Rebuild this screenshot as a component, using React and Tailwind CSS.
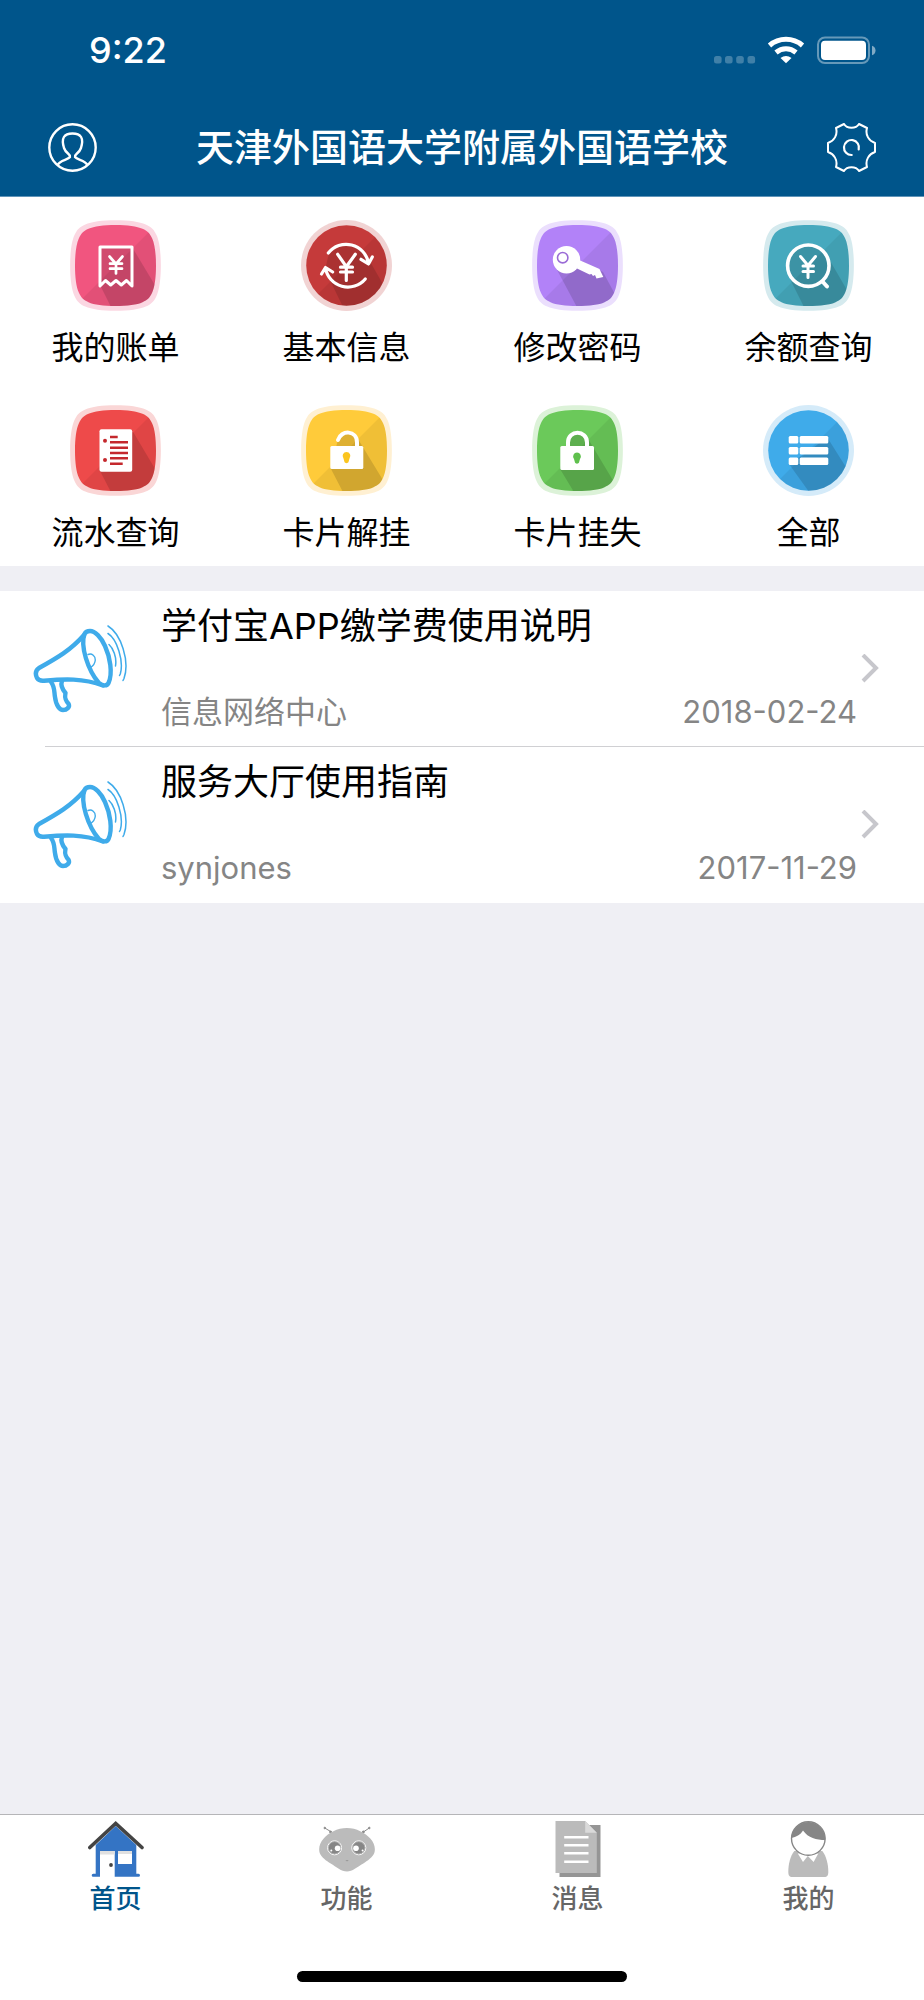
import { useState } from "react"

const SQUIRCLE =
  "M45.5 5C57.5 5 67 6.3 72.5 8.8C77.5 11 80 13.5 82.2 18.5C84.7 24 86 33.5 86 45.5C86 57.5 84.7 67 82.2 72.5C80 77.5 77.5 80 72.5 82.2C67 84.7 57.5 86 45.5 86C33.500 86 24 84.7 18.5 82.2C13.5 80 11 77.5 8.8 72.5C6.3 67 5 57.500 5 45.5C5 33.5 6.3 24 8.8 18.5C11 13.5 13.5 11 18.5 8.8C24 6.3 33.5 5 45.5 5Z"

// Coloured badge with a pale rim, a diagonal shade and a long shadow
const Badge = ({ id, color, rim, round, shadow, children }) => (
  <svg viewBox="0 0 91 91" className="w-[91px] h-[91px]" aria-hidden="true">
    <defs>
      <clipPath id={id}>
        {round ? <circle cx="45.5" cy="45.5" r="40.3" /> : <path d={SQUIRCLE} />}
      </clipPath>
    </defs>
    {round ? (
      <circle cx="45.5" cy="45.5" r="45.5" fill={rim} />
    ) : (
      <path
        d={SQUIRCLE}
        fill={rim}
        transform="translate(45.5 45.5) scale(1.12) translate(-45.5 -45.5)"
      />
    )}
    <g clipPath={`url(#${id})`}>
      <rect width="91" height="91" fill={color} />
      <path d="M91 0L0 91H91Z" fill="#000" opacity="0.06" />
      <path d={shadow} fill="#000" opacity="0.13" />
    </g>
    {children}
  </svg>
)

const stroke = {
  fill: "none",
  stroke: "#fff",
  strokeLinecap: "round",
  strokeLinejoin: "round",
}

const BillIcon = () => (
  <Badge id="bill" color="#f1557f" rim="#fbd7e2" shadow="M30 27H62L91 75V91H43L30 65Z">
    <g {...stroke} strokeWidth="3">
      <path d="M30 66V27H62V66L56.5 60.5L51.3 65L46 60.5L40.7 65L35.5 60.5Z" />
      <path d="M39.5 36.5L46 44L52.5 36.5M46 44V53.5M40 43.7H52M40 48.7H52" strokeWidth="2.7" />
    </g>
  </Badge>
)

const InfoIcon = () => (
  <Badge id="info" color="#c53a3a" rim="#f1d3d3" round shadow="M28 33L45 23L63 31L91 80V91H44L24 50Z">
    <g {...stroke} strokeWidth="3.2">
      <path d="M27.3 33A22.7 22.7 0 0 1 67.5 43M60 39.3L67.5 44L71.3 37" />
      <path d="M64.3 59A22.7 22.7 0 0 1 24.5 48M20.5 54L24.5 47.5L31.7 52" />
      <path d="M36.7 34.3L45.3 46.7L54.3 34.3M45.3 46.7V60.5M39.5 47.2H51.5M39.5 52H51.5" />
    </g>
  </Badge>
)

const KeyIcon = () => (
  <Badge id="key" color="#b282f8" rim="#ebdffd" shadow="M24 48L47 40L71 52L91 89V91H47Z">
    <path d="M46 39.5L67.5 49L71.3 57L64.5 58.5L63 55L61 56L59.5 54L57.5 54.5L45 48.5Z" fill="#fff" />
    <circle cx="34.5" cy="39.7" r="13.7" fill="#fff" />
    <circle cx="30.7" cy="37.7" r="5.2" fill="#fff" stroke="#9a6bd6" strokeWidth="1.6" />
  </Badge>
)

const BalanceIcon = () => (
  <Badge
    id="balance"
    color="#46a9be"
    rim="#d5eaee"
    shadow="M45 25C56 25 63 31 66 39L91 82V91H43L28 61C20 42 29 26 45 25Z">
    <g {...stroke} strokeWidth="3.6">
      <circle cx="45.3" cy="45.7" r="20.7" />
      <path d="M59.5 61.5L64 66.5" strokeWidth="4" />
      <path d="M37.5 36.5L45 45.5L52.5 36.5M45 45.5V57.5M40 46H50.5M40 51.5H50.5" strokeWidth="3" />
    </g>
  </Badge>
)

const RecordIcon = () => (
  <Badge id="record" color="#ee4a4a" rim="#fad6d6" shadow="M62 25L91 74V91H43L30 66Z">
    <rect x="29.5" y="24.3" width="32.7" height="42.4" rx="2" fill="#fff" />
    <path
      d="M40 32H47.7M40 37.3H58M40 42.7H58M40 48H58M40 53.3H58M40 58.7H52.7"
      stroke="#c4282d"
      strokeWidth="2.6"
    />
    <circle cx="35" cy="35.7" r="2" fill="#c4282d" />
    <circle cx="35" cy="55" r="2" fill="#c4282d" />
  </Badge>
)

const UnlockIcon = () => (
  <Badge id="unlock" color="#ffcb3a" rim="#fff0d2" shadow="M37 34C40 26 52 24 57 34L91 90V91H44L30 64Z">
    <path d="M37 35C40 24.5 56 25 56 37.5V43" {...stroke} strokeWidth="4" />
    <rect x="29.3" y="41" width="33" height="23" rx="1.5" fill="#fff" />
    <path
      d="M45.5 47A4 4 0 0 1 48.5 53.5L47.5 57C47 58.5 44 58.5 43.5 57L42.5 53.5A4 4 0 0 1 45.5 47Z"
      fill="#fbc51f"
    />
  </Badge>
)

const LockIcon = () => (
  <Badge id="lock" color="#6bc95a" rim="#dcf2d8" shadow="M36 36C38 25 52 24 55 32L91 92H45L28 64Z">
    <path d="M36 42V37.5C36 24.5 55 24.5 55 37.5V42" {...stroke} strokeWidth="4" />
    <rect x="28.3" y="41" width="33.7" height="24" rx="1.5" fill="#fff" />
    <path
      d="M45 47.5A4 4 0 0 1 48 54L47 57.5C46.5 59 43.5 59 43 57.5L42 54A4 4 0 0 1 45 47.5Z"
      fill="#5fc04d"
    />
  </Badge>
)

const AllIcon = () => (
  <Badge id="all" color="#3fabea" rim="#d5ebf9" round shadow="M64 32L91 75V91H49L26 59L50 43Z">
    <g fill="#fff">
      {[31, 42, 52.5].map((y) => (
        <g key={y}>
          <rect x="25.7" y={y} width="9.6" height="7.4" rx="1.5" />
          <rect x="36.7" y={y} width="28.6" height="7.4" rx="1.5" />
        </g>
      ))}
    </g>
  </Badge>
)

const MegaphoneIcon = () => (
  <svg
    viewBox="0 0 96 88"
    className="w-24 h-[88px] shrink-0"
    fill="none"
    stroke="#3fabea"
    strokeWidth="4.4"
    strokeLinecap="round"
    strokeLinejoin="round"
    aria-hidden="true">
    <path d="M57 6C62 6 68 12 72 21C77 32 80 48 75.5 58C74 61.5 69 61 65.5 57.5C55 45 47 21 51.5 9C52.5 7 54.5 6 57 6Z" />
    <path d="M51 10C38 25 24 33 6 43C2 46 2 49 4 53C6 56 8 56 11 55.7C31 54 50 53 70 60.5" />
    <path d="M18 57C22 62 21 67 22 72C23 81 27 85 30 85C34 85 37 82 35.7 79C31 74 32 71 32.5 68C30 65 27 61 29 56" />
    <path d="M55 29.5C59 28 62.5 31 62.3 35C62 38.5 60 41 57.5 42.5" strokeWidth="1.4" />
    <path
      d="M75 1C88 9 97 36 91 53.5L90 55.5M75 8.5C84 14 91 36 87.3 49L86.5 50.5M76 19.5C80 23 84 32 82.5 41"
      strokeWidth="1.5"
    />
  </svg>
)

const HomeTabIcon = () => (
  <svg viewBox="0 0 56 56" className="w-14 h-14" aria-hidden="true">
    <path
      d="M7.7 24L27.7 5L48.3 24V52.7H50.5A1.5 1.5 0 0 1 50.5 55.7H5.2A1.5 1.5 0 0 1 5.2 52.7H7.7Z"
      fill="#3474c4"
    />
    <path d="M12 30H26.7V56H12ZM30 30H44V43H30Z" fill="#fff" />
    <path d="M12 30H26.7V33.5H12ZM30 30H44V33H30Z" fill="#e0e0e0" />
    <circle cx="23" cy="44" r="1.9" fill="#444" />
    <path d="M1.8 26.5L27.7 2.5L54 26.5" fill="none" stroke="#444" strokeWidth="3.6" strokeLinecap="round" />
  </svg>
)

const FeatureTabIcon = () => (
  <svg viewBox="0.7 -4 56 56" className="w-14 h-14" aria-hidden="true">
    <g stroke="#8a8a8a" fill="#8a8a8a" strokeWidth="1">
      <path d="M6.5 3L12.3 6.5M51 3L45 7" />
      <circle cx="6.5" cy="3" r="0.8" />
      <circle cx="51" cy="3" r="0.8" />
      <circle cx="12.3" cy="7" r="1" />
      <circle cx="45" cy="7" r="1" />
    </g>
    <path
      d="M28.7 3C38 3 47 8 52 13.5C56 18 57.5 23 56 28C54.5 32 49 36 45 38.5C39 42 34 46.5 28.7 46.5C23 46.5 18 42 12.4 38.5C8 36 3 32 1.4 28C0 23 1.4 18 5.4 13.5C10 8 19 3 28.7 3Z"
      fill="#bbb"
    />
    <g fill="#868686" stroke="#fff" strokeWidth="1">
      <circle cx="16.3" cy="22.8" r="7" />
      <circle cx="40.5" cy="22.8" r="7" />
    </g>
    <g fill="none" stroke="#bbb" strokeWidth="0.8">
      <circle cx="16.3" cy="22.8" r="6.2" />
      <circle cx="40.5" cy="22.8" r="6.2" />
    </g>
    <g fill="#fff">
      <circle cx="19.3" cy="23.2" r="2.8" />
      <circle cx="37.7" cy="23.2" r="2.8" />
      <circle cx="13" cy="25.5" r="1" />
      <circle cx="44.3" cy="25.5" r="1" />
    </g>
    <path d="M27 35H30.5L28.7 36.5Z" fill="#999" />
  </svg>
)

const MessageTabIcon = () => (
  <svg viewBox="-5.5 0 56 56" className="w-14 h-14" aria-hidden="true">
    <path d="M4 4H45V56H4Z" fill="#959595" />
    <path d="M0 0H29.7L41.3 11.7V52H0Z" fill="#bbb" />
    <path d="M29.7 0L41.3 11.7H29.7Z" fill="#dadada" />
    <path d="M8.7 16.3H33M8.7 24.3H33M8.7 32.3H33M8.7 40.7H33" stroke="#fff" strokeWidth="2.6" />
  </svg>
)

const MeTabIcon = () => (
  <svg viewBox="0.7 0 56 56" className="w-14 h-14" aria-hidden="true">
    <path d="M14 30H42C46 35 48 43 48 51C48 54 47 56 44 56H12C9 56 8 54 8 51C8 43 10 35 14 30Z" fill="#bbb" />
    <path d="M17.5 32.5L22.7 41L27.5 35L33.3 41L38 32.5Z" fill="#fff" />
    <circle cx="28" cy="17.5" r="16.8" fill="#fff" stroke="#868686" strokeWidth="1.4" />
    <path d="M11 17A17 17 0 0 1 45 19C36 19 28 17 22.7 9.5C20 14 16 16 11 17Z" fill="#868686" />
  </svg>
)

const services = [
  { name: "我的账单", Icon: BillIcon },
  { name: "基本信息", Icon: InfoIcon },
  { name: "修改密码", Icon: KeyIcon },
  { name: "余额查询", Icon: BalanceIcon },
  { name: "流水查询", Icon: RecordIcon },
  { name: "卡片解挂", Icon: UnlockIcon },
  { name: "卡片挂失", Icon: LockIcon },
  { name: "全部", Icon: AllIcon },
]

const notices = [
  { title: "学付宝APP缴学费使用说明", author: "信息网络中心", date: "2018-02-24" },
  { title: "服务大厅使用指南", author: "synjones", date: "2017-11-29" },
]

const tabs = [
  { name: "首页", Icon: HomeTabIcon },
  { name: "功能", Icon: FeatureTabIcon },
  { name: "消息", Icon: MessageTabIcon },
  { name: "我的", Icon: MeTabIcon },
]

const StatusBar = () => (
  <div className="flex items-center justify-between h-[100px] pl-[89px] pr-12">
    <span className="text-[36px] leading-10 font-medium">9:22</span>
    <svg viewBox="0 0 162 28" className="w-[162px] h-7" fill="#fff" aria-hidden="true">
      <g opacity="0.25">
        <rect x="0" y="20" width="7.6" height="7.6" rx="2.5" />
        <rect x="11" y="20" width="7.6" height="7.6" rx="2.5" />
        <rect x="22.2" y="20" width="7.6" height="7.6" rx="2.5" />
        <rect x="33.5" y="20" width="7.6" height="7.6" rx="2.5" />
      </g>
      <g fill="none" stroke="#fff" strokeWidth="5">
        <path d="M55.5 9.5C65 1.3 79 1.3 88.5 9.5" />
        <path d="M62 16.5C68 11.5 76 11.5 82 16.5" />
      </g>
      <path d="M66.5 22C70 19.3 74 19.3 77.5 22L72 27.3Z" />
      <rect x="104" y="1.5" width="51" height="25.5" rx="7" fill="none" stroke="#fff" strokeWidth="2" opacity="0.4" />
      <rect x="107" y="4.7" width="45" height="19.3" rx="4" />
      <path d="M158 9.7C162.7 11 162.7 18 158 19.3Z" opacity="0.5" />
    </svg>
  </div>
)

const Header = () => (
  <header className="bg-[#00558b] text-white border-b border-[#5f94b9]">
    <StatusBar />
    <div className="flex items-center justify-between h-24 px-12 pb-0.5">
      <button type="button" aria-label="个人中心">
        <svg
          viewBox="0 0 49 49"
          className="w-[49px] h-[49px]"
          fill="none"
          stroke="#fff"
          strokeWidth="2.4"
          aria-hidden="true">
          <circle cx="24.5" cy="24.5" r="23.2" />
          <path d="M9.5 42C12 37 20 37 22 34C23 31 18 31 16 25C13 15 16 10.5 24.5 10.5C33 10.5 36 15 33 25C31 31 26 31 27 34C29 37 37 37 39.5 42" />
        </svg>
      </button>
      <h1 className="text-[38px] leading-[48px] font-medium">天津外国语大学附属外国语学校</h1>
      <button type="button" aria-label="设置">
        <svg
          viewBox="0 0 49 49"
          className="w-[49px] h-[49px]"
          fill="none"
          stroke="#fff"
          strokeWidth="2"
          strokeLinecap="round"
          strokeLinejoin="round"
          aria-hidden="true">
          <path d="M17 1C20 6 29 6 32 1L40 5C38 12 42 18 48 20V29C42 31 38 37 40 44L32 48C29 43 20 43 17 48L9 44C11 37 7 31 1 29V20C7 18 11 12 9 5Z" />
          <path d="M31.7 26.5A7.5 7.5 0 1 0 24.7 32" strokeWidth="2.2" />
        </svg>
      </button>
    </div>
  </header>
)

const App = () => {
  const [activeTab, setActiveTab] = useState("首页")

  return (
    <div className="flex flex-col min-h-screen bg-[#efeff4] text-black font-['Inter','Noto_Sans_CJK_SC',sans-serif]">
      <Header />

      <main className="flex-1">
        {/* Services */}
        <section className="grid grid-cols-4 gap-y-px bg-white">
          {services.map(({ name, Icon }) => (
            <button key={name} type="button" className="flex flex-col items-center gap-[17px] pt-[23px] pb-[13px]">
              <Icon />
              <span className="text-[32px] leading-10">{name}</span>
            </button>
          ))}
        </section>

        {/* Notices */}
        <ul className="mt-[25px] pb-px bg-white">
          {notices.map((notice, index) => (
            <li key={notice.title}>
              {index > 0 && <div className="h-px ml-[45px] bg-[#d0d0d3]" />}
              <a href="#notice" className="flex items-center pl-[33px] pr-[45px]">
                <MegaphoneIcon />
                <div className="flex-1 ml-8 pt-[11px] pb-3.5">
                  <h2 className="text-[36px] leading-[48px]">{notice.title}</h2>
                  <div className="flex justify-between mt-[42px] text-[31px] leading-10 text-[#858585]">
                    <span>{notice.author}</span>
                    <time dateTime={notice.date}>{notice.date}</time>
                  </div>
                </div>
                <svg viewBox="0 0 18 30" className="w-[18px] h-[30px] ml-1" aria-hidden="true">
                  <path d="M2 1L15 14L2 27" fill="none" stroke="#c7c7cc" strokeWidth="4" />
                </svg>
              </a>
            </li>
          ))}
        </ul>
      </main>

      {/* Bottom tabs */}
      <footer className="bg-white border-t border-[#b5b5b8]">
        <nav className="grid grid-cols-4 pt-1.5">
          {tabs.map(({ name, Icon }) => (
            <button
              key={name}
              type="button"
              onClick={() => setActiveTab(name)}
              className={`flex flex-col items-center gap-1.5 text-[26px] leading-8 font-medium ${
                activeTab === name ? "text-[#00558b]" : "text-[#666666]"
              }`}>
              <Icon />
              {name}
            </button>
          ))}
        </nav>
        <div className="w-[330px] h-[11px] mt-14 mb-[18px] mx-auto rounded-full bg-black" />
      </footer>
    </div>
  )
}

export default App
